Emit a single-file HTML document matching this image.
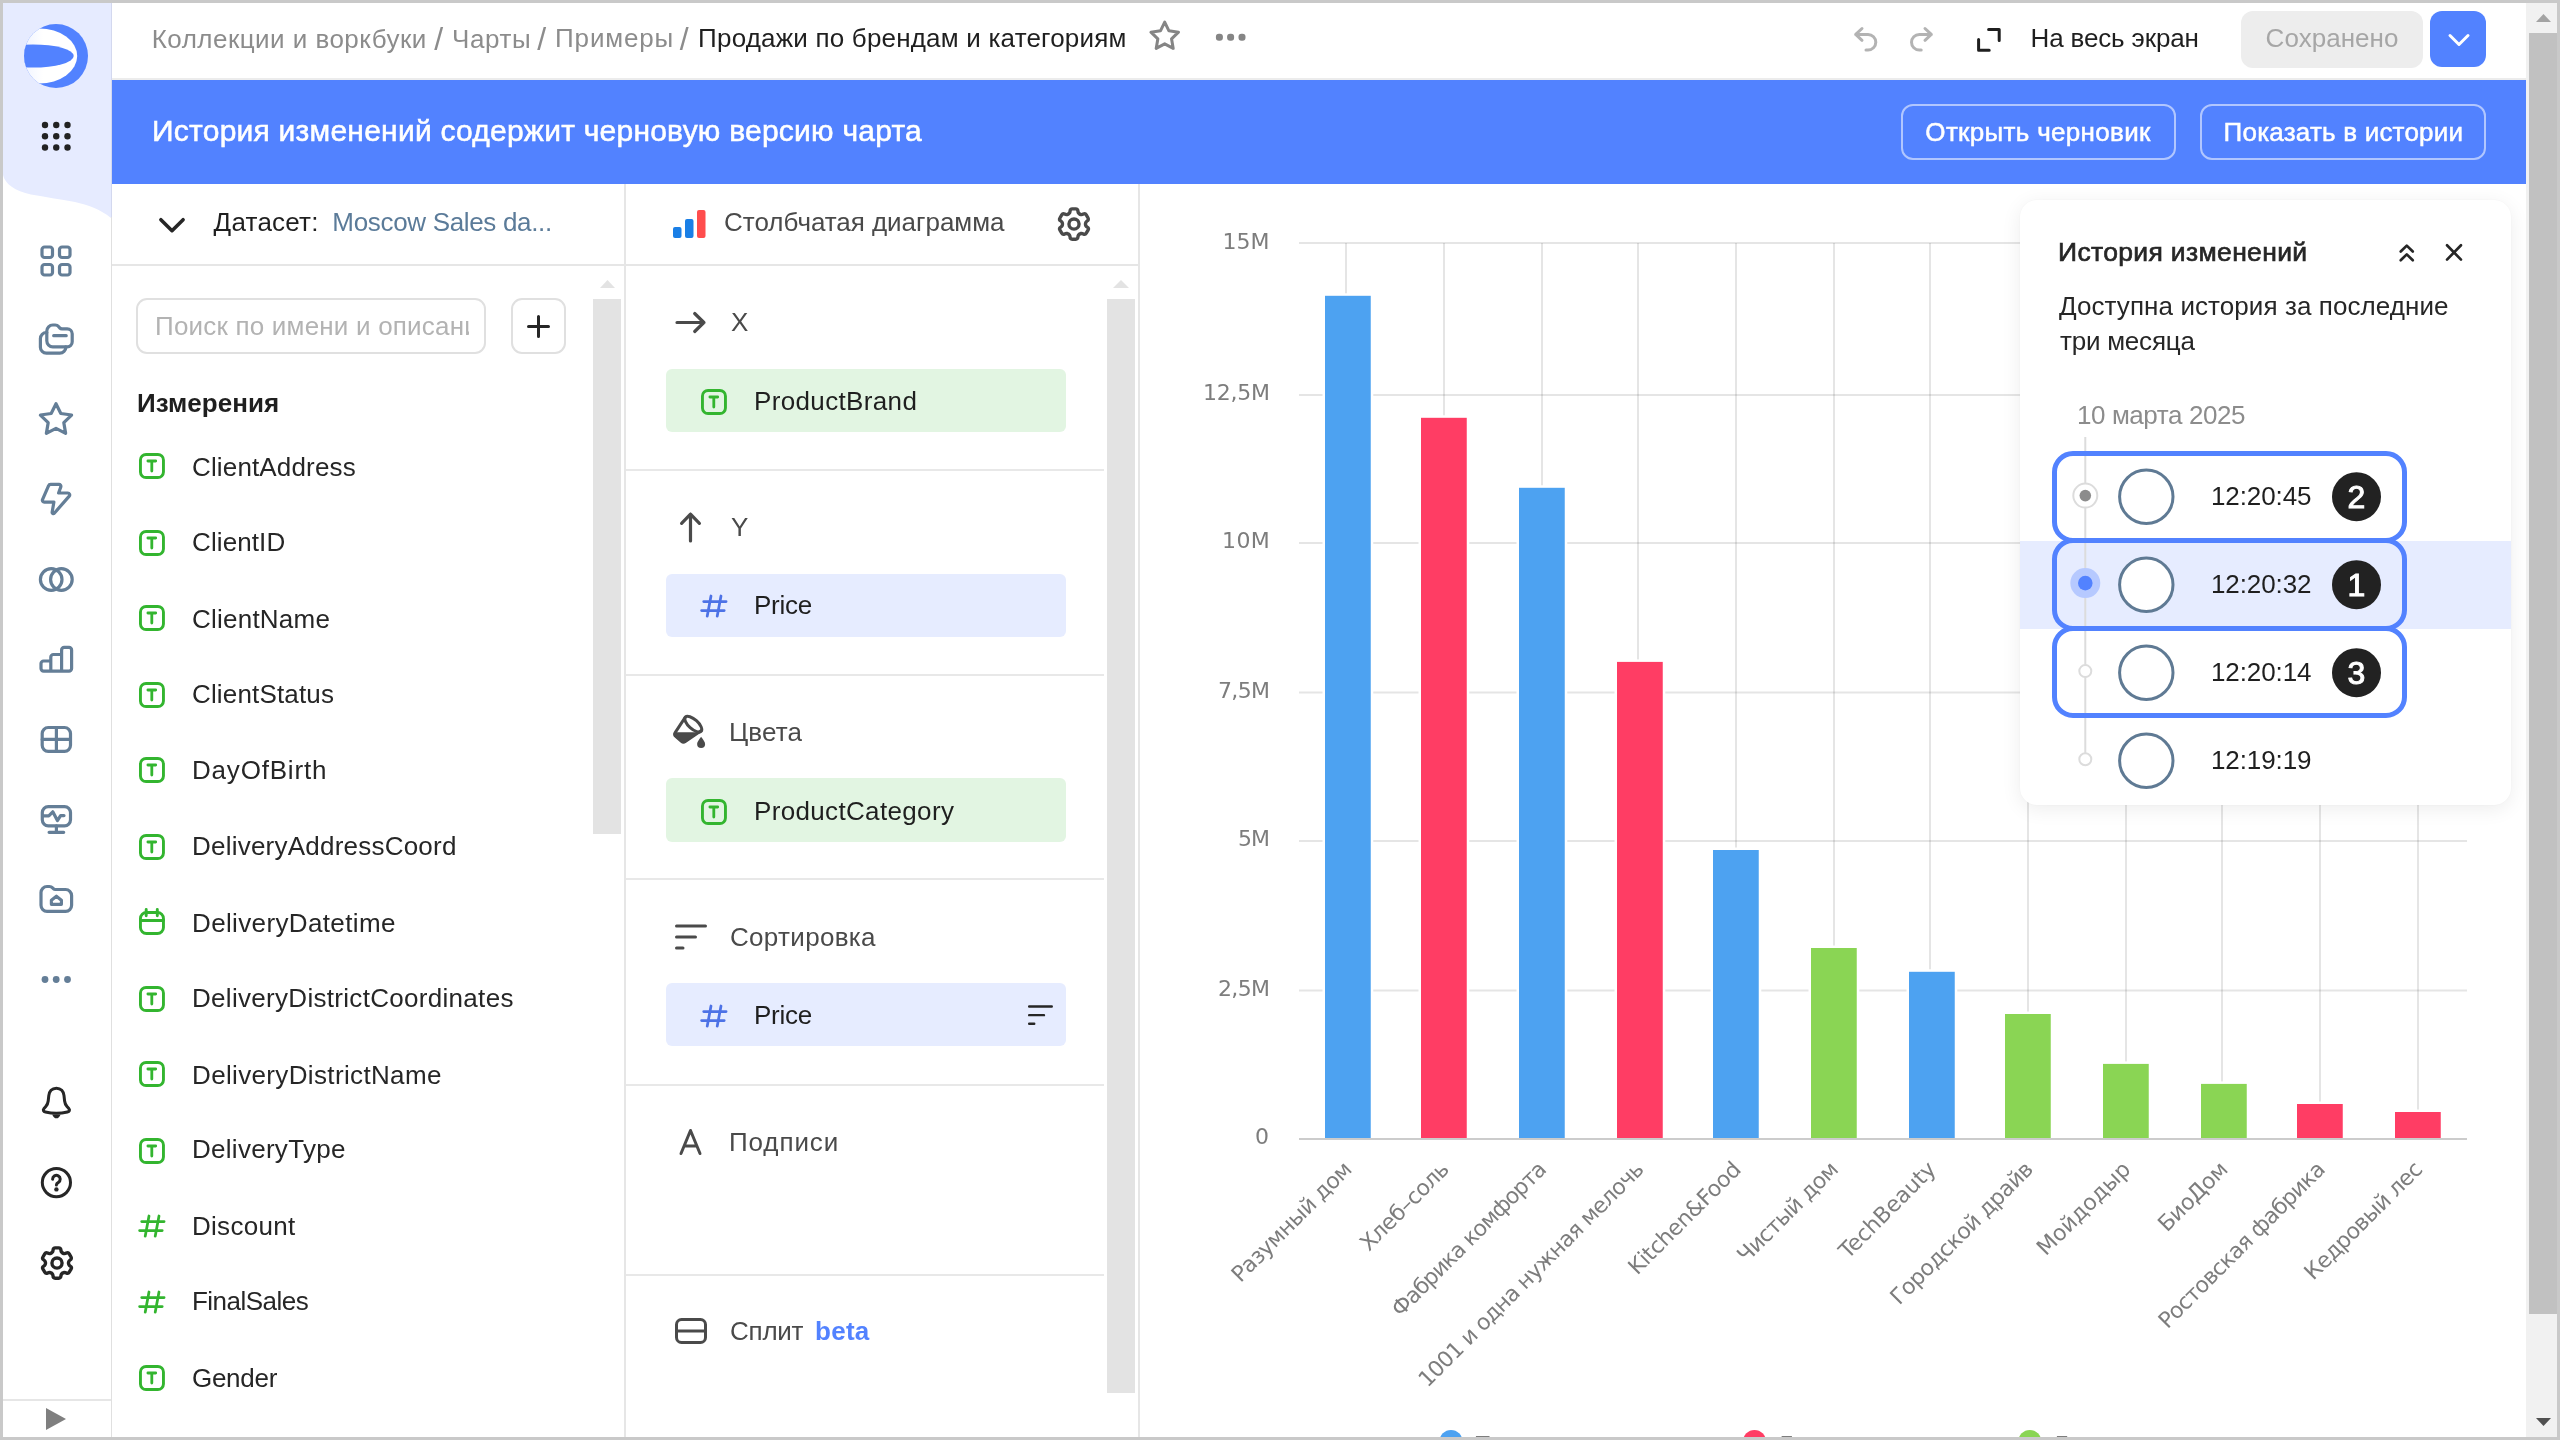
<!DOCTYPE html>
<html lang="ru"><head><meta charset="utf-8"><title>Продажи по брендам и категориям</title>
<style>
*{box-sizing:border-box;margin:0;padding:0}
html,body{width:2560px;height:1440px;overflow:hidden;background:#fff}
body{position:relative;font-family:"Liberation Sans",sans-serif}
.a{position:absolute}
.t{position:absolute;white-space:pre;line-height:1}
.g{will-change:transform}
svg{position:absolute;overflow:visible}
.ic{fill:none;stroke:#647e97;stroke-width:1.6;stroke-linecap:round;stroke-linejoin:round}
.ib{fill:none;stroke:#262626;stroke-width:1.5;stroke-linecap:round;stroke-linejoin:round}
.ig{fill:none;stroke:#33b52f;stroke-width:1.5;stroke-linecap:round;stroke-linejoin:round}
.is{fill:none;stroke:#4a4a4a;stroke-width:1.5;stroke-linecap:round;stroke-linejoin:round}
</style></head>
<body>
<svg style="left:0;top:0" width="112" height="230" viewBox="0 0 112 230"><path d="M3 3H111V218C100 209 88 205 75 202C60 199 45 197 31 194.4C15 191 5 184 3 175Z" fill="#e6ebff"/></svg>
<div class="a" style="left:111px;top:3px;width:1px;height:1434px;background:#e0e0e0;"></div>
<div class="a" style="left:111px;top:3px;width:1px;height:214px;background:#d3d8ef;"></div>
<svg style="left:24px;top:24px" width="64" height="64" viewBox="0 0 64 64">
<defs><clipPath id="lc"><circle cx="32" cy="32" r="32"/></clipPath>
<linearGradient id="lg" x1="0" x2="1" y1="0" y2="0"><stop offset="0" stop-color="#dfe7ff"/><stop offset="0.55" stop-color="#ffffff"/></linearGradient></defs>
<circle cx="32" cy="32" r="32" fill="#5282ff"/>
<g clip-path="url(#lc)"><ellipse cx="15.3" cy="32" rx="37.9" ry="27.5" fill="url(#lg)"/>
<ellipse cx="9" cy="32" rx="40.7" ry="11.6" fill="#5282ff"/></g></svg>
<svg style="left:0;top:0" width="112" height="160" viewBox="0 0 112 160"><circle cx="45" cy="125" r="3.2" fill="#222"/><circle cx="56.25" cy="125" r="3.2" fill="#222"/><circle cx="67.5" cy="125" r="3.2" fill="#222"/><circle cx="45" cy="136.25" r="3.2" fill="#222"/><circle cx="56.25" cy="136.25" r="3.2" fill="#222"/><circle cx="67.5" cy="136.25" r="3.2" fill="#222"/><circle cx="45" cy="147.5" r="3.2" fill="#222"/><circle cx="56.25" cy="147.5" r="3.2" fill="#222"/><circle cx="67.5" cy="147.5" r="3.2" fill="#222"/></svg>
<svg style="left:40px;top:245px;" width="32" height="32" viewBox="0 0 16 16"><rect x="1" y="1" width="5.25" height="5.25" rx="1.3" class="ic"/><rect x="9.75" y="1" width="5.25" height="5.25" rx="1.3" class="ic"/><rect x="1" y="9.75" width="5.25" height="5.25" rx="1.3" class="ic"/><rect x="9.75" y="9.75" width="5.25" height="5.25" rx="1.3" class="ic"/></svg>
<svg style="left:40px;top:324px;" width="32" height="32" viewBox="0 0 16 16"><path class="ic" d="M3.4 3.5a3 3 0 0 1 3-3h1.2c.7 0 1.3.3 1.7.8l.6.7c.3.3.7.4 1.1.4h2.600a2.500 2.500 0 0 1 2.500 2.500v4a2.500 2.500 0 0 1-2.500 2.500h-7.200a3 3 0 0 1-3-3z"/><path class="ic" d="M6.850 5.830H13.100"/><path class="ic" d="M3.400 4.250h-.2a3 3 0 0 0-3 3v4.350a3 3 0 0 0 3 3h6.700a3 3 0 0 0 3-3v-.2"/></svg>
<svg style="left:40px;top:403px;" width="32" height="32" viewBox="0 0 16 16"><polygon class="ic" points="8.00,0.35 10.41,5.23 15.80,6.02 11.90,9.82 12.82,15.18 8.00,12.65 3.18,15.18 4.10,9.82 0.20,6.02 5.59,5.23"/></svg>
<svg style="left:40px;top:483px;" width="32" height="32" viewBox="0 0 16 16"><path class="ic" d="M5.300 .700H9.500a.95 .95 0 0 1 .9 1.250L9.300 5H13.900a.95 .95 0 0 1 .72 1.570L7.150 15.100a.62 .62 0 0 1-1.080-.5L6.950 9.550H2.150a.95 .95 0 0 1-.9-1.280L4.250 1.400a1.150 1.150 0 0 1 1.050-.700Z"/></svg>
<svg style="left:40px;top:563px;" width="32" height="32" viewBox="0 0 16 16"><circle class="ic" cx="5.6" cy="8.25" r="5.4"/><circle class="ic" cx="10.7" cy="8.25" r="5.4"/></svg>
<svg style="left:40px;top:643px;" width="32" height="32" viewBox="0 0 16 16"><path class="ic" d="M.5 10.300a1.300 1.300 0 0 1 1.300-1.300H5.400V7.050a1.300 1.300 0 0 1 1.300-1.300H10.800V3.450a1.300 1.300 0 0 1 1.300-1.300h2.400a1.300 1.300 0 0 1 1.300 1.300V12.800a1.300 1.300 0 0 1-1.300 1.300H1.800a1.300 1.300 0 0 1-1.300-1.300ZM5.400 9V14.100M10.800 5.750V14.100"/></svg>
<svg style="left:40px;top:723px;" width="32" height="32" viewBox="0 0 16 16"><rect class="ic" x="1.1" y="2.25" width="14.15" height="11.9" rx="3"/><path class="ic" d="M8.2 2.25v11.900M1.100 8.200h14.150"/></svg>
<svg style="left:40px;top:803px;" width="32" height="32" viewBox="0 0 16 16"><rect class="ic" x="1.15" y="1.8" width="14.1" height="9.6" rx="3"/><path class="ic" d="M8.200 11.400v3.250M4.550 14.650h7.300M1.500 6.450H4.400L6.400 4.400 8.700 8.800 10.300 6.300H12"/></svg>
<svg style="left:40px;top:883px;" width="32" height="32" viewBox="0 0 16 16"><path class="ic" d="M.5 4.750a3 3 0 0 1 3-3h1.200c.6 0 1.200.25 1.600.7l.5.5c.2.2.5.3.8.3h5.200a3 3 0 0 1 3 3v4.900a3 3 0 0 1-3 3H3.500a3 3 0 0 1-3-3Z"/><path class="ic" d="M5.700 8.600L8.200 6.600 10.700 8.600V10.650H5.700Z"/></svg>
<svg style="left:40px;top:963px;" width="32" height="32" viewBox="0 0 16 16"><circle cx="2.5" cy="8.25" r="1.7" fill="#647e97"/><circle cx="8.1" cy="8.25" r="1.7" fill="#647e97"/><circle cx="13.75" cy="8.25" r="1.7" fill="#647e97"/></svg>
<svg style="left:40px;top:1087px;" width="32" height="32" viewBox="0 0 16 16"><path class="ib" d="M8.200 .600C5.900 .600 4.600 2.300 4.400 4.300L4.100 7C4 8 3.600 8.900 2.900 9.700L2 10.700C1.300 11.500 1.700 12.300 2.700 12.500 6.300 13.300 10.100 13.300 13.700 12.500 14.700 12.300 15.100 11.500 14.400 10.700L13.500 9.700C12.800 8.900 12.400 8 12.300 7L12 4.300C11.800 2.300 10.500 .600 8.200 .600Z"/><path d="M6.100 13.700C6.500 14.900 7.300 15.650 8.200 15.650 9.100 15.650 9.900 14.900 10.300 13.700Z" fill="#262626"/></svg>
<svg style="left:40px;top:1167px;" width="32" height="32" viewBox="0 0 16 16"><circle class="ib" cx="8.2" cy="7.8" r="7.05"/><path class="ib" d="M6.300 6.100a1.900 1.900 0 1 1 2.900 1.600C8.500 8.100 8.200 8.400 8.200 9"/><circle cx="8.2" cy="11.2" r="1.1" fill="#262626"/></svg>
<svg style="left:38.9px;top:1245.0px;" width="36" height="36" viewBox="0 0 16 16"><path fill="#262626" fill-rule="evenodd" clip-rule="evenodd" d="M7.199 2H8.8a.2.2 0 0 1 .2.2c0 1.808 1.958 2.939 3.524 2.034a.199.199 0 0 1 .271.073l.802 1.388a.199.199 0 0 1-.073.272c-1.566.904-1.566 3.164 0 4.069a.199.199 0 0 1 .073.271l-.802 1.388a.199.199 0 0 1-.271.073C10.958 10.863 9 11.993 9 13.8a.2.2 0 0 1-.199.2H7.2a.199.199 0 0 1-.2-.2c0-1.808-1.958-2.938-3.524-2.034a.199.199 0 0 1-.272-.073l-.8-1.388a.199.199 0 0 1 .072-.271c1.566-.905 1.566-3.165 0-4.07a.199.199 0 0 1-.073-.271l.801-1.388a.199.199 0 0 1 .272-.073C5.042 5.138 7 4.007 7 2.2c0-.11.089-.199.199-.199ZM5.500 2.200c0-.94.76-1.700 1.699-1.700H8.800c.94 0 1.700.76 1.700 1.700a.85.85 0 0 0 1.274.735 1.699 1.699 0 0 1 2.320.622l.802 1.388c.469.813.19 1.851-.622 2.320a.85.85 0 0 0 0 1.472 1.700 1.700 0 0 1 .622 2.320l-.802 1.388a1.699 1.699 0 0 1-2.320.622.85.85 0 0 0-1.274.735c0 .939-.76 1.700-1.699 1.700H7.200a1.700 1.700 0 0 1-1.699-1.700.85.85 0 0 0-1.274-.735 1.698 1.698 0 0 1-2.320-.622l-.802-1.388a1.699 1.699 0 0 1 .622-2.320.85.85 0 0 0 0-1.471 1.699 1.699 0 0 1-.622-2.321l.801-1.388a1.699 1.699 0 0 1 2.320-.622A.85.85 0 0 0 5.500 2.200Zm4 5.800a1.500 1.500 0 1 1-3 0 1.500 1.500 0 0 1 3 0ZM11 8a3 3 0 1 1-6 0 3 3 0 0 1 6 0Z"/></svg>
<div class="a" style="left:3px;top:1399px;width:108px;height:2px;background:#e6e6e6;"></div>
<svg style="left:46px;top:1408px" width="20" height="22" viewBox="0 0 20 22"><path d="M0 0L20 11 0 22z" fill="#7f7f7f"/></svg>
<div class="a" style="left:112px;top:78px;width:2414px;height:2px;background:#ececec;"></div>
<svg style="left:0;top:0" width="1300" height="80" viewBox="0 0 1300 80"><polygon points="1164.70,22.16 1168.93,30.84 1178.49,32.18 1171.55,38.88 1173.22,48.39 1164.70,43.86 1156.18,48.39 1157.85,38.88 1150.91,32.18 1160.47,30.84" fill="none" stroke="#858585" stroke-width="3" stroke-linejoin="round"/><rect x="1215.900" y="33.700" width="7" height="7" rx="3" fill="#858585"/><rect x="1227.100" y="33.700" width="7" height="7" rx="3" fill="#858585"/><rect x="1238.500" y="33.700" width="7" height="7" rx="3" fill="#858585"/></svg>
<svg style="left:0;top:0" width="2560" height="80" viewBox="0 0 2560 80"><g fill="none" stroke="#b3b3b3" stroke-width="3" stroke-linecap="round" stroke-linejoin="round"><path d="M1862 28.500L1855.700 34.400 1862 40.300M1855.700 34.400H1868a7.800 7.800 0 0 1 0 15.600H1866"/><path d="M1925 28.500L1931.300 34.400 1925 40.300M1931.300 34.400H1919.300a7.800 7.800 0 0 0 0 15.600H1921.200"/></g><path d="M1988.600 29.500H1999.200V40.400M1978.600 39.400V50.350H1989.200" fill="none" stroke="#1f1f1f" stroke-width="3" stroke-linecap="round" stroke-linejoin="round"/></svg>
<div class="a" style="left:2241px;top:11px;width:181.5px;height:56.5px;background:#ededed;border-radius:12px"></div>
<div class="a" style="left:2430px;top:11px;width:56px;height:56px;background:#5282ff;border-radius:12px"></div>
<svg style="left:2448px;top:33px" width="22" height="14" viewBox="0 0 22 14"><path d="M2 2.500L11 11.500 20 2.500" fill="none" stroke="#fff" stroke-width="3" stroke-linecap="round" stroke-linejoin="round"/></svg>
<div class="a" style="left:112px;top:80px;width:2414px;height:104px;background:#5282ff;"></div>
<div class="a" style="left:1900.75px;top:103.75px;width:275px;height:56.25px;background:transparent;border:2px solid rgba(255,255,255,.55);border-radius:12px"></div>
<div class="a" style="left:2200px;top:103.75px;width:286px;height:56.25px;background:transparent;border:2px solid rgba(255,255,255,.55);border-radius:12px"></div>
<div class="a" style="left:112px;top:264px;width:1026px;height:2px;background:#e6e6e6;"></div>
<div class="a" style="left:624px;top:184px;width:2px;height:1253px;background:#e6e6e6;"></div>
<div class="a" style="left:1138px;top:184px;width:2px;height:1253px;background:#e6e6e6;"></div>
<svg style="left:158px;top:217px" width="28" height="17" viewBox="0 0 28 17"><path d="M2.900 2.700L14 13.700 25.100 2.700" fill="none" stroke="#262626" stroke-width="3.6" stroke-linecap="round" stroke-linejoin="round"/></svg>
<div class="a" style="left:136px;top:298px;width:350px;height:55.5px;background:#fff;border:2px solid #e0e0e0;border-radius:11px"></div>
<div class="a" style="left:510.75px;top:298px;width:55px;height:55.5px;background:#fff;border:2px solid #e0e0e0;border-radius:11px"></div>
<svg style="left:526.75px;top:314.500px" width="23" height="23" viewBox="0 0 23 23"><path d="M11.500 1.500V21.500M1.500 11.500H21.500" fill="none" stroke="#262626" stroke-width="3" stroke-linecap="round"/></svg>
<svg style="left:600px;top:280px" width="15" height="8" viewBox="0 0 15 8"><path d="M0 8L7.500 0 15 8z" fill="#e3e3e3"/></svg>
<div class="a" style="left:593px;top:298.5px;width:28px;height:535.5px;background:#e3e3e3;"></div>
<svg style="left:139.1px;top:453px;" width="26" height="26" viewBox="0 0 26 26"><rect x="1.45" y="1.45" width="23" height="23.1" rx="5.6" class="ig" style="stroke-width:2.9"/><path d="M8.900 8H16.700M12.800 8V18.050" class="ig" style="stroke-width:2.8"/></svg>
<svg style="left:139.1px;top:530.3px;" width="26" height="26" viewBox="0 0 26 26"><rect x="1.45" y="1.45" width="23" height="23.1" rx="5.6" class="ig" style="stroke-width:2.9"/><path d="M8.900 8H16.700M12.800 8V18.050" class="ig" style="stroke-width:2.8"/></svg>
<svg style="left:139.1px;top:605.3px;" width="26" height="26" viewBox="0 0 26 26"><rect x="1.45" y="1.45" width="23" height="23.1" rx="5.6" class="ig" style="stroke-width:2.9"/><path d="M8.900 8H16.700M12.800 8V18.050" class="ig" style="stroke-width:2.8"/></svg>
<svg style="left:139.1px;top:682.3px;" width="26" height="26" viewBox="0 0 26 26"><rect x="1.45" y="1.45" width="23" height="23.1" rx="5.6" class="ig" style="stroke-width:2.9"/><path d="M8.900 8H16.700M12.800 8V18.050" class="ig" style="stroke-width:2.8"/></svg>
<svg style="left:139.1px;top:757.3px;" width="26" height="26" viewBox="0 0 26 26"><rect x="1.45" y="1.45" width="23" height="23.1" rx="5.6" class="ig" style="stroke-width:2.9"/><path d="M8.900 8H16.700M12.800 8V18.050" class="ig" style="stroke-width:2.8"/></svg>
<svg style="left:139.1px;top:834px;" width="26" height="26" viewBox="0 0 26 26"><rect x="1.45" y="1.45" width="23" height="23.1" rx="5.6" class="ig" style="stroke-width:2.9"/><path d="M8.900 8H16.700M12.800 8V18.050" class="ig" style="stroke-width:2.8"/></svg>
<svg style="left:139.1px;top:986px;" width="26" height="26" viewBox="0 0 26 26"><rect x="1.45" y="1.45" width="23" height="23.1" rx="5.6" class="ig" style="stroke-width:2.9"/><path d="M8.900 8H16.700M12.800 8V18.050" class="ig" style="stroke-width:2.8"/></svg>
<svg style="left:139.1px;top:1060.8px;" width="26" height="26" viewBox="0 0 26 26"><rect x="1.45" y="1.45" width="23" height="23.1" rx="5.6" class="ig" style="stroke-width:2.9"/><path d="M8.900 8H16.700M12.800 8V18.050" class="ig" style="stroke-width:2.8"/></svg>
<svg style="left:139.1px;top:1137.8px;" width="26" height="26" viewBox="0 0 26 26"><rect x="1.45" y="1.45" width="23" height="23.1" rx="5.6" class="ig" style="stroke-width:2.9"/><path d="M8.900 8H16.700M12.800 8V18.050" class="ig" style="stroke-width:2.8"/></svg>
<svg style="left:139.1px;top:1365.3px;" width="26" height="26" viewBox="0 0 26 26"><rect x="1.45" y="1.45" width="23" height="23.1" rx="5.6" class="ig" style="stroke-width:2.9"/><path d="M8.900 8H16.700M12.800 8V18.050" class="ig" style="stroke-width:2.8"/></svg>
<svg style="left:139.1px;top:908px;" width="26" height="27" viewBox="0 0 26 27"><rect x="1.45" y="4.450" width="23" height="21" rx="6" class="ig" style="stroke-width:2.9"/><path d="M1.500 12.550h23M7.200 1.400v6.300M18.300 1.400v6.300" class="ig" style="stroke-width:2.9"/></svg>
<svg style="left:138px;top:1213px;" width="28" height="26" viewBox="0 0 28 26"><path d="M3.700 8.500H26.100M1.600 17.500H24.200M11 3L7.200 23.200M21 3L17.200 23.200" fill="none" stroke="#33b52f" stroke-width="2.750" stroke-linecap="round"/></svg>
<svg style="left:138px;top:1288.5px;" width="28" height="26" viewBox="0 0 28 26"><path d="M3.700 8.500H26.100M1.600 17.500H24.200M11 3L7.200 23.200M21 3L17.200 23.200" fill="none" stroke="#33b52f" stroke-width="2.750" stroke-linecap="round"/></svg>
<svg style="left:673px;top:210px" width="33" height="28" viewBox="0 0 33 28"><rect x="0" y="17" width="8.500" height="11" rx="2" fill="#1a7fe6"/><rect x="12" y="9" width="8.500" height="19" rx="2" fill="#1a7fe6"/><rect x="24" y="0" width="8.500" height="28" rx="2" fill="#ff4d4d"/></svg>
<svg style="left:1056px;top:206.2px;" width="36" height="36" viewBox="0 0 16 16"><path fill="#4a4a4a" fill-rule="evenodd" clip-rule="evenodd" d="M7.199 2H8.8a.2.2 0 0 1 .2.2c0 1.808 1.958 2.939 3.524 2.034a.199.199 0 0 1 .271.073l.802 1.388a.199.199 0 0 1-.073.272c-1.566.904-1.566 3.164 0 4.069a.199.199 0 0 1 .073.271l-.802 1.388a.199.199 0 0 1-.271.073C10.958 10.863 9 11.993 9 13.8a.2.2 0 0 1-.199.2H7.2a.199.199 0 0 1-.2-.2c0-1.808-1.958-2.938-3.524-2.034a.199.199 0 0 1-.272-.073l-.8-1.388a.199.199 0 0 1 .072-.271c1.566-.905 1.566-3.165 0-4.07a.199.199 0 0 1-.073-.271l.801-1.388a.199.199 0 0 1 .272-.073C5.042 5.138 7 4.007 7 2.2c0-.11.089-.199.199-.199ZM5.500 2.200c0-.94.76-1.700 1.699-1.700H8.800c.94 0 1.700.76 1.700 1.700a.85.85 0 0 0 1.274.735 1.699 1.699 0 0 1 2.320.622l.802 1.388c.469.813.19 1.851-.622 2.320a.85.85 0 0 0 0 1.472 1.700 1.700 0 0 1 .622 2.320l-.802 1.388a1.699 1.699 0 0 1-2.320.622.85.85 0 0 0-1.274.735c0 .939-.76 1.700-1.699 1.700H7.200a1.700 1.700 0 0 1-1.699-1.700.85.85 0 0 0-1.274-.735 1.698 1.698 0 0 1-2.320-.622l-.802-1.388a1.699 1.699 0 0 1 .622-2.320.85.85 0 0 0 0-1.471 1.699 1.699 0 0 1-.622-2.321l.801-1.388a1.699 1.699 0 0 1 2.320-.622A.85.85 0 0 0 5.500 2.200Zm4 5.800a1.500 1.500 0 1 1-3 0 1.500 1.500 0 0 1 3 0ZM11 8a3 3 0 1 1-6 0 3 3 0 0 1 6 0Z"/></svg>
<svg style="left:1113px;top:280px" width="16" height="8" viewBox="0 0 16 8"><path d="M0 8L8 0 16 8z" fill="#e3e3e3"/></svg>
<div class="a" style="left:1107px;top:298.5px;width:28px;height:1094px;background:#e3e3e3;"></div>
<div class="a" style="left:626px;top:469px;width:478px;height:2px;background:#e8e8e8;"></div>
<div class="a" style="left:626px;top:674px;width:478px;height:2px;background:#e8e8e8;"></div>
<div class="a" style="left:626px;top:878px;width:478px;height:2px;background:#e8e8e8;"></div>
<div class="a" style="left:626px;top:1084px;width:478px;height:2px;background:#e8e8e8;"></div>
<div class="a" style="left:626px;top:1274px;width:478px;height:2px;background:#e8e8e8;"></div>
<div class="a" style="left:666.25px;top:368.5px;width:399.5px;height:63.5px;background:#e2f5e2;border-radius:6px"></div>
<div class="a" style="left:666.25px;top:573.75px;width:399.5px;height:63px;background:#e6ecff;border-radius:6px"></div>
<div class="a" style="left:666.25px;top:778px;width:399.5px;height:63.75px;background:#e2f5e2;border-radius:6px"></div>
<div class="a" style="left:666.25px;top:983px;width:399.5px;height:63.25px;background:#e6ecff;border-radius:6px"></div>
<svg style="left:701.3px;top:389.3px;" width="26" height="26" viewBox="0 0 26 26"><rect x="1.45" y="1.45" width="23" height="23.1" rx="5.6" class="ig" style="stroke-width:2.9"/><path d="M8.900 8H16.700M12.800 8V18.050" class="ig" style="stroke-width:2.8"/></svg>
<svg style="left:701.3px;top:798.8px;" width="26" height="26" viewBox="0 0 26 26"><rect x="1.45" y="1.45" width="23" height="23.1" rx="5.6" class="ig" style="stroke-width:2.9"/><path d="M8.900 8H16.700M12.800 8V18.050" class="ig" style="stroke-width:2.8"/></svg>
<svg style="left:700.45px;top:593.3px;" width="28" height="26" viewBox="0 0 28 26"><path d="M3.700 8.500H26.100M1.600 17.500H24.200M11 3L7.200 23.200M21 3L17.200 23.200" fill="none" stroke="#4d72e6" stroke-width="2.750" stroke-linecap="round"/></svg>
<svg style="left:700.45px;top:1002.6px;" width="28" height="26" viewBox="0 0 28 26"><path d="M3.700 8.500H26.100M1.600 17.500H24.200M11 3L7.200 23.200M21 3L17.200 23.200" fill="none" stroke="#4d72e6" stroke-width="2.750" stroke-linecap="round"/></svg>
<svg style="left:675px;top:309px" width="32" height="27" viewBox="0 0 32 27"><path d="M2 13.500H29M19.700 4.500L28.900 13.500 19.700 22.500" fill="none" stroke="#4a4a4a" stroke-width="3.2" stroke-linecap="round" stroke-linejoin="round"/></svg>
<svg style="left:677px;top:511px" width="27" height="32" viewBox="0 0 27 32"><path d="M13.500 30V3.200M4.600 12.300L13.500 3.200 22.400 12.300" fill="none" stroke="#4a4a4a" stroke-width="3.2" stroke-linecap="round" stroke-linejoin="round"/></svg>
<svg style="left:660px;top:705px" width="60" height="50" viewBox="0 0 60 50"><g fill="none" stroke="#4a4a4a" stroke-width="3" stroke-linejoin="round" stroke-linecap="round"><path d="M25.200 12.300L15.300 27.300a3.200 3.200 0 0 0 .7 4.300L21.500 36.300a3.200 3.200 0 0 0 3.800 .2L41 25.800"/><ellipse cx="33.300" cy="19.200" rx="10.600" ry="4.700" transform="rotate(42 33.300 19.200)"/></g><path d="M14.600 28H37.500L41 25.800 25.300 36.500a3.200 3.200 0 0 1-3.800-.2L16 31.600a3.200 3.200 0 0 1-1.400-3.600Z" fill="#4a4a4a" stroke="#4a4a4a" stroke-width="1.5" stroke-linejoin="round"/><path d="M41.100 31.800C43.500 35 45.100 37.300 45.100 39a4 4 0 0 1-8 0C37.100 37.300 38.700 35 41.100 31.800Z" fill="#4a4a4a"/></svg>
<svg style="left:674.5px;top:923.5px" width="32" height="26" viewBox="0 0 32 26"><path d="M1.500 2H30.500M1.500 13H20.500M1.500 24H8" fill="none" stroke="#4a4a4a" stroke-width="3.00" stroke-linecap="round"/></svg>
<svg style="left:1027.5px;top:1004.5px" width="24.96" height="20.28" viewBox="0 0 32 26"><path d="M1.500 2H30.500M1.500 13H20.500M1.500 24H8" fill="none" stroke="#262626" stroke-width="3.08" stroke-linecap="round"/></svg>
<svg style="left:679px;top:1129px" width="23" height="26" viewBox="0 0 23 26"><path d="M2 24.500L11.500 1.500 21 24.500M5.300 17H17.700" fill="none" stroke="#4a4a4a" stroke-width="3" stroke-linecap="round" stroke-linejoin="round"/></svg>
<svg style="left:674.5px;top:1317.500px" width="32" height="26" viewBox="0 0 32 26"><rect x="1.500" y="1.500" width="29" height="23" rx="5" fill="none" stroke="#4a4a4a" stroke-width="3"/><path d="M1.500 13H30.500" stroke="#4a4a4a" stroke-width="3"/></svg>
<svg style="left:0;top:0;will-change:transform" width="2560" height="1440" viewBox="0 0 2560 1440"><rect x="1299" y="242" width="1168" height="2" fill="rgba(0,0,0,.1)"/><rect x="1299" y="394" width="1168" height="2" fill="rgba(0,0,0,.1)"/><rect x="1299" y="542" width="1168" height="2" fill="rgba(0,0,0,.1)"/><rect x="1299" y="691.5" width="1168" height="2" fill="rgba(0,0,0,.1)"/><rect x="1299" y="840" width="1168" height="2" fill="rgba(0,0,0,.1)"/><rect x="1299" y="989.5" width="1168" height="2" fill="rgba(0,0,0,.1)"/><rect x="1345" y="243" width="2" height="896" fill="rgba(0,0,0,.1)"/><rect x="1443" y="243" width="2" height="896" fill="rgba(0,0,0,.1)"/><rect x="1541" y="243" width="2" height="896" fill="rgba(0,0,0,.1)"/><rect x="1637" y="243" width="2" height="896" fill="rgba(0,0,0,.1)"/><rect x="1735" y="243" width="2" height="896" fill="rgba(0,0,0,.1)"/><rect x="1833" y="243" width="2" height="896" fill="rgba(0,0,0,.1)"/><rect x="1929" y="243" width="2" height="896" fill="rgba(0,0,0,.1)"/><rect x="2027" y="243" width="2" height="896" fill="rgba(0,0,0,.1)"/><rect x="2125" y="243" width="2" height="896" fill="rgba(0,0,0,.1)"/><rect x="2221" y="243" width="2" height="896" fill="rgba(0,0,0,.1)"/><rect x="2319" y="243" width="2" height="896" fill="rgba(0,0,0,.1)"/><rect x="2417" y="243" width="2" height="896" fill="rgba(0,0,0,.1)"/><rect x="1299" y="1138" width="1168" height="2" fill="#cccccc"/><rect x="1322.5" y="293.3" width="50.75" height="844.7" fill="#fff"/><rect x="1325" y="295.8" width="45.75" height="842.2" fill="#4da2f1"/><rect x="1418.5" y="415.3" width="50.75" height="722.7" fill="#fff"/><rect x="1421" y="417.8" width="45.75" height="720.2" fill="#ff3d64"/><rect x="1516.5" y="485.3" width="50.75" height="652.7" fill="#fff"/><rect x="1519" y="487.8" width="45.75" height="650.2" fill="#4da2f1"/><rect x="1614.5" y="659.4" width="50.75" height="478.6" fill="#fff"/><rect x="1617" y="661.9" width="45.75" height="476.1" fill="#ff3d64"/><rect x="1710.5" y="847.5" width="50.75" height="290.5" fill="#fff"/><rect x="1713" y="850" width="45.75" height="288" fill="#4da2f1"/><rect x="1808.5" y="945.5" width="50.75" height="192.5" fill="#fff"/><rect x="1811" y="948" width="45.75" height="190" fill="#8ad554"/><rect x="1906.5" y="969.3" width="50.75" height="168.70000000000005" fill="#fff"/><rect x="1909" y="971.8" width="45.75" height="166.20000000000005" fill="#4da2f1"/><rect x="2002.5" y="1011.5" width="50.75" height="126.5" fill="#fff"/><rect x="2005" y="1014" width="45.75" height="124" fill="#8ad554"/><rect x="2100.5" y="1061.4" width="50.75" height="76.59999999999991" fill="#fff"/><rect x="2103" y="1063.9" width="45.75" height="74.09999999999991" fill="#8ad554"/><rect x="2198.5" y="1081.4" width="50.75" height="56.59999999999991" fill="#fff"/><rect x="2201" y="1083.9" width="45.75" height="54.09999999999991" fill="#8ad554"/><rect x="2294.5" y="1101.5" width="50.75" height="36.5" fill="#fff"/><rect x="2297" y="1104" width="45.75" height="34" fill="#ff3d64"/><rect x="2392.5" y="1109.5" width="50.75" height="28.5" fill="#fff"/><rect x="2395" y="1112" width="45.75" height="26" fill="#ff3d64"/><text transform="translate(1353.2,1170.5) rotate(-45)" text-anchor="end" textLength="159.5" lengthAdjust="spacing" font-family='"DejaVu Sans","Liberation Sans",sans-serif' font-size="22" fill="#7d7d7d">Разумный дом</text><text transform="translate(1450.5,1170.5) rotate(-45)" text-anchor="end" textLength="115.3" lengthAdjust="spacing" font-family='"DejaVu Sans","Liberation Sans",sans-serif' font-size="22" fill="#7d7d7d">Хлеб–соль</text><text transform="translate(1547.8,1170.5) rotate(-45)" text-anchor="end" textLength="208.3" lengthAdjust="spacing" font-family='"DejaVu Sans","Liberation Sans",sans-serif' font-size="22" fill="#7d7d7d">Фабрика комфорта</text><text transform="translate(1645.2,1170.5) rotate(-45)" text-anchor="end" textLength="308" lengthAdjust="spacing" font-family='"DejaVu Sans","Liberation Sans",sans-serif' font-size="22" fill="#7d7d7d">1001 и одна нужная мелочь</text><text transform="translate(1742.5,1170.5) rotate(-45)" text-anchor="end" textLength="148.9" lengthAdjust="spacing" font-family='"DejaVu Sans","Liberation Sans",sans-serif' font-size="22" fill="#7d7d7d">Kitchen&amp;Food</text><text transform="translate(1839.8,1170.5) rotate(-45)" text-anchor="end" textLength="132.3" lengthAdjust="spacing" font-family='"DejaVu Sans","Liberation Sans",sans-serif' font-size="22" fill="#7d7d7d">Чистый дом</text><text transform="translate(1937.2,1170.5) rotate(-45)" text-anchor="end" textLength="126.2" lengthAdjust="spacing" font-family='"DejaVu Sans","Liberation Sans",sans-serif' font-size="22" fill="#7d7d7d">TechBeauty</text><text transform="translate(2034.5,1170.5) rotate(-45)" text-anchor="end" textLength="191.4" lengthAdjust="spacing" font-family='"DejaVu Sans","Liberation Sans",sans-serif' font-size="22" fill="#7d7d7d">Городской драйв</text><text transform="translate(2131.8,1170.5) rotate(-45)" text-anchor="end" textLength="121.7" lengthAdjust="spacing" font-family='"DejaVu Sans","Liberation Sans",sans-serif' font-size="22" fill="#7d7d7d">Мойдодыр</text><text transform="translate(2229.2,1170.5) rotate(-45)" text-anchor="end" textLength="88.1" lengthAdjust="spacing" font-family='"DejaVu Sans","Liberation Sans",sans-serif' font-size="22" fill="#7d7d7d">БиоДом</text><text transform="translate(2326.5,1170.5) rotate(-45)" text-anchor="end" textLength="225" lengthAdjust="spacing" font-family='"DejaVu Sans","Liberation Sans",sans-serif' font-size="22" fill="#7d7d7d">Ростовская фабрика</text><text transform="translate(2423.8,1170.5) rotate(-45)" text-anchor="end" textLength="156.3" lengthAdjust="spacing" font-family='"DejaVu Sans","Liberation Sans",sans-serif' font-size="22" fill="#7d7d7d">Кедровый лес</text><circle cx="1451" cy="1441.5" r="11.5" fill="#4da2f1"/><text x="1476" y="1451.6" font-family='"DejaVu Sans","Liberation Sans",sans-serif' font-size="22" fill="#7d7d7d">Техника для дома</text><circle cx="1754.5" cy="1441.5" r="11.5" fill="#ff3d64"/><text x="1779.5" y="1451.6" font-family='"DejaVu Sans","Liberation Sans",sans-serif' font-size="22" fill="#7d7d7d">Бытовая химия</text><circle cx="2029.8" cy="1441.5" r="11.5" fill="#8ad554"/><text x="2054.8" y="1451.6" font-family='"DejaVu Sans","Liberation Sans",sans-serif' font-size="22" fill="#7d7d7d">Бытовые товары</text></svg>
<div class="a" style="left:2019.5px;top:200px;width:491px;height:604.5px;background:#fff;border-radius:17px;box-shadow:0 4px 20px rgba(0,0,0,.075),0 0 2px rgba(0,0,0,.05)"></div>
<div class="a" style="left:2019.5px;top:541px;width:491px;height:87.5px;background:#e6ecff;"></div>
<svg style="left:0;top:0;will-change:transform" width="2560" height="1440" viewBox="0 0 2560 1440"><path d="M2400.700 251.500L2406.750 245.600 2412.800 251.500M2400.700 260.300L2406.750 254.400 2412.800 260.300" fill="none" stroke="#262626" stroke-width="2.700" stroke-linecap="round" stroke-linejoin="round"/><path d="M2447 245.300L2461 259.600M2461 245.300L2447 259.600" fill="none" stroke="#262626" stroke-width="2.700" stroke-linecap="round"/><rect x="2084.300" y="437" width="2" height="316" fill="#dcdcdc"/><circle cx="2085.300" cy="495.600" r="12" fill="#fff" stroke="#dcdcdc" stroke-width="2"/><circle cx="2085.300" cy="495.600" r="5.800" fill="#8c8c8c"/><circle cx="2085.300" cy="583.100" r="15" fill="#b6c9ff"/><circle cx="2085.300" cy="583.100" r="7.300" fill="#5282ff"/><circle cx="2085.300" cy="671.100" r="6" fill="#fff" stroke="#dcdcdc" stroke-width="2"/><circle cx="2085.300" cy="759.300" r="6" fill="#fff" stroke="#dcdcdc" stroke-width="2"/><circle cx="2146.300" cy="496.7" r="26.700" fill="#fff" stroke="#5f7a94" stroke-width="3"/><circle cx="2146.300" cy="584.7" r="26.700" fill="#fff" stroke="#5f7a94" stroke-width="3"/><circle cx="2146.300" cy="672.7" r="26.700" fill="#fff" stroke="#5f7a94" stroke-width="3"/><circle cx="2146.300" cy="760.7" r="26.700" fill="#fff" stroke="#5f7a94" stroke-width="3"/><circle cx="2356.500" cy="496.7" r="24.500" fill="#222"/><text x="2356.500" y="508.0" text-anchor="middle" font-family='"Liberation Sans",sans-serif' font-size="32" fill="#fff" stroke="#fff" stroke-width="1">2</text><circle cx="2356.500" cy="584.7" r="24.500" fill="#222"/><text x="2356.500" y="596.0" text-anchor="middle" font-family='"Liberation Sans",sans-serif' font-size="32" fill="#fff" stroke="#fff" stroke-width="1">1</text><circle cx="2356.500" cy="672.7" r="24.500" fill="#222"/><text x="2356.500" y="684.0" text-anchor="middle" font-family='"Liberation Sans",sans-serif' font-size="32" fill="#fff" stroke="#fff" stroke-width="1">3</text></svg>
<div class="a" style="left:2052px;top:450.8px;width:355px;height:92.5px;background:transparent;border:5px solid #5282ff;border-radius:21px"></div>
<div class="a" style="left:2052px;top:538.3px;width:355px;height:92.5px;background:transparent;border:5px solid #5282ff;border-radius:21px"></div>
<div class="a" style="left:2052px;top:625.8px;width:355px;height:92.5px;background:transparent;border:5px solid #5282ff;border-radius:21px"></div>
<div class="a" style="left:150px;top:304px;width:319px;height:44px;overflow:hidden"><span class="t g" style="left:4.500px;top:8.500px;font-size:26px;color:#b3b3b3;letter-spacing:0.2px">Поиск по имени и описанию</span></div>
<span class="t" style='left:151.75px;top:25.59px;font-size:26px;color:#8c8c8c;letter-spacing:0.466px;'>Коллекции и воркбуки</span>
<span class="t" style='left:434.20px;top:22.51px;font-size:32px;color:#8c8c8c;'>/</span>
<span class="t" style='left:452.06px;top:25.59px;font-size:26px;color:#8c8c8c;letter-spacing:0.604px;'>Чарты</span>
<span class="t" style='left:537.20px;top:22.51px;font-size:32px;color:#8c8c8c;'>/</span>
<span class="t" style='left:555.10px;top:25.29px;font-size:26px;color:#8c8c8c;letter-spacing:0.822px;'>Примеры</span>
<span class="t" style='left:679.70px;top:22.51px;font-size:32px;color:#8c8c8c;'>/</span>
<span class="t" style='left:698.10px;top:24.79px;font-size:26px;color:#1f1f1f;letter-spacing:0.195px;'>Продажи по брендам и категориям</span>
<span class="t" style='left:2030.60px;top:25.49px;font-size:26px;color:#1f1f1f;letter-spacing:-0.156px;'>На весь экран</span>
<span class="t" style='left:2265.60px;top:25.49px;font-size:26px;color:#a6a6a6;letter-spacing:0.045px;'>Сохранено</span>
<span class="t" style='left:152.06px;top:115.61px;font-size:30px;color:#fff;letter-spacing:0.235px;-webkit-text-stroke:0.55px #fff;'>История изменений содержит черновую версию чарта</span>
<span class="t" style='left:1925.35px;top:119.29px;font-size:26px;color:#fff;letter-spacing:0.313px;-webkit-text-stroke:0.5px #fff;'>Открыть черновик</span>
<span class="t" style='left:2223.60px;top:119.29px;font-size:26px;color:#fff;letter-spacing:0.208px;-webkit-text-stroke:0.5px #fff;'>Показать в истории</span>
<span class="t" style='left:213.60px;top:209.29px;font-size:26px;color:#1f1f1f;letter-spacing:0.225px;'>Датасет:</span>
<span class="t" style='left:332.35px;top:209.29px;font-size:26px;color:#5b7b99;letter-spacing:-0.327px;'>Moscow Sales da...</span>
<span class="t" style='left:724.10px;top:209.29px;font-size:26px;color:#4a4a4a;letter-spacing:-0.037px;'>Столбчатая диаграмма</span>
<span class="t g" style='left:136.60px;top:389.74px;font-size:26px;color:#1f1f1f;font-weight:700;letter-spacing:0.027px;'>Измерения</span>
<span class="t g" style='left:192.00px;top:453.74px;font-size:26px;color:#262626;letter-spacing:0.150px;'>ClientAddress</span>
<span class="t g" style='left:192.00px;top:529.24px;font-size:26px;color:#262626;letter-spacing:0.101px;'>ClientID</span>
<span class="t g" style='left:192.00px;top:605.99px;font-size:26px;color:#262626;letter-spacing:0.226px;'>ClientName</span>
<span class="t g" style='left:192.00px;top:680.99px;font-size:26px;color:#262626;letter-spacing:0.156px;'>ClientStatus</span>
<span class="t g" style='left:192.00px;top:757.49px;font-size:26px;color:#262626;letter-spacing:0.802px;'>DayOfBirth</span>
<span class="t g" style='left:192.00px;top:832.99px;font-size:26px;color:#262626;letter-spacing:0.224px;'>DeliveryAddressCoord</span>
<span class="t g" style='left:192.00px;top:909.74px;font-size:26px;color:#262626;letter-spacing:0.361px;'>DeliveryDatetime</span>
<span class="t g" style='left:192.00px;top:984.74px;font-size:26px;color:#262626;letter-spacing:0.302px;'>DeliveryDistrictCoordinates</span>
<span class="t g" style='left:192.00px;top:1061.74px;font-size:26px;color:#262626;letter-spacing:0.351px;'>DeliveryDistrictName</span>
<span class="t g" style='left:192.00px;top:1136.24px;font-size:26px;color:#262626;letter-spacing:0.281px;'>DeliveryType</span>
<span class="t g" style='left:192.00px;top:1213.49px;font-size:26px;color:#262626;letter-spacing:0.281px;'>Discount</span>
<span class="t g" style='left:192.00px;top:1288.49px;font-size:26px;color:#262626;letter-spacing:-0.527px;'>FinalSales</span>
<span class="t g" style='left:192.00px;top:1365.49px;font-size:26px;color:#262626;letter-spacing:-0.283px;'>Gender</span>
<span class="t g" style='left:731.35px;top:308.99px;font-size:26px;color:#4a4a4a;'>X</span>
<span class="t g" style='left:753.60px;top:387.99px;font-size:26px;color:#1f1f1f;letter-spacing:0.352px;'>ProductBrand</span>
<span class="t g" style='left:730.60px;top:513.74px;font-size:26px;color:#4a4a4a;'>Y</span>
<span class="t g" style='left:753.60px;top:592.49px;font-size:26px;color:#1f1f1f;letter-spacing:-0.282px;'>Price</span>
<span class="t g" style='left:729.10px;top:719.49px;font-size:26px;color:#4a4a4a;letter-spacing:0.108px;'>Цвета</span>
<span class="t g" style='left:753.60px;top:797.99px;font-size:26px;color:#1f1f1f;letter-spacing:0.343px;'>ProductCategory</span>
<span class="t g" style='left:729.60px;top:924.49px;font-size:26px;color:#4a4a4a;letter-spacing:0.318px;'>Сортировка</span>
<span class="t g" style='left:753.60px;top:1001.99px;font-size:26px;color:#1f1f1f;letter-spacing:-0.282px;'>Price</span>
<span class="t g" style='left:728.60px;top:1128.99px;font-size:26px;color:#4a4a4a;letter-spacing:0.892px;'>Подписи</span>
<span class="t g" style='left:729.60px;top:1317.99px;font-size:26px;color:#4a4a4a;letter-spacing:-0.237px;'>Сплит</span>
<span class="t g" style='left:814.90px;top:1317.99px;font-size:26px;color:#5282ff;font-weight:700;letter-spacing:0.267px;'>beta</span>
<span class="t" style='left:2058.00px;top:238.67px;font-size:26.5px;color:#262626;letter-spacing:0.341px;-webkit-text-stroke:0.65px #262626;'>История изменений</span>
<span class="t g" style='left:2058.75px;top:292.99px;font-size:26px;color:#262626;letter-spacing:0.078px;'>Доступна история за последние</span>
<span class="t g" style='left:2059.60px;top:327.99px;font-size:26px;color:#262626;letter-spacing:-0.225px;'>три месяца</span>
<span class="t g" style='left:2076.60px;top:401.99px;font-size:26px;color:#8c8c8c;letter-spacing:-0.421px;'>10 марта 2025</span>
<span class="t g" style='left:2210.60px;top:483.49px;font-size:26px;color:#1f1f1f;letter-spacing:-0.107px;'>12:20:45</span>
<span class="t g" style='left:2210.60px;top:571.49px;font-size:26px;color:#1f1f1f;letter-spacing:-0.107px;'>12:20:32</span>
<span class="t g" style='left:2210.60px;top:659.49px;font-size:26px;color:#1f1f1f;letter-spacing:-0.107px;'>12:20:14</span>
<span class="t g" style='left:2210.60px;top:747.49px;font-size:26px;color:#1f1f1f;letter-spacing:-0.107px;'>12:19:19</span>
<span class="t" style='left:1222.60px;top:231.38px;font-size:22px;color:#7d7d7d;font-family:"DejaVu Sans", "Liberation Sans", sans-serif;'>15M</span>
<span class="t g" style='left:1202.60px;top:382.13px;font-size:22px;color:#7d7d7d;font-family:"DejaVu Sans", "Liberation Sans", sans-serif;letter-spacing:-0.246px;'>12,5M</span>
<span class="t g" style='left:1221.85px;top:530.13px;font-size:22px;color:#7d7d7d;font-family:"DejaVu Sans", "Liberation Sans", sans-serif;letter-spacing:0.378px;'>10M</span>
<span class="t g" style='left:1217.60px;top:679.63px;font-size:22px;color:#7d7d7d;font-family:"DejaVu Sans", "Liberation Sans", sans-serif;letter-spacing:-0.662px;'>7,5M</span>
<span class="t g" style='left:1237.60px;top:828.13px;font-size:22px;color:#7d7d7d;font-family:"DejaVu Sans", "Liberation Sans", sans-serif;letter-spacing:-0.997px;'>5M</span>
<span class="t g" style='left:1217.60px;top:977.63px;font-size:22px;color:#7d7d7d;font-family:"DejaVu Sans", "Liberation Sans", sans-serif;letter-spacing:-0.662px;'>2,5M</span>
<span class="t g" style='left:1254.85px;top:1126.13px;font-size:22px;color:#7d7d7d;font-family:"DejaVu Sans", "Liberation Sans", sans-serif;'>0</span>
<div class="a" style="left:2526px;top:3px;width:31px;height:1434px;background:#f1f1f1;"></div>
<div class="a" style="left:2529px;top:33px;width:28px;height:1281px;background:#c1c1c1;"></div>
<svg style="left:2536px;top:14px" width="15" height="8" viewBox="0 0 15 8"><path d="M0 8L7.5 0 15 8z" fill="#a3a3a3"/></svg>
<svg style="left:2536px;top:1418px" width="15" height="8" viewBox="0 0 15 8"><path d="M0 0L7.5 8 15 0z" fill="#505050"/></svg>
<div class="a" style="left:0px;top:0px;width:2560px;height:3px;background:#c9c9c9;z-index:50"></div>
<div class="a" style="left:0px;top:1437px;width:2560px;height:3px;background:#c9c9c9;z-index:50"></div>
<div class="a" style="left:0px;top:0px;width:3px;height:1440px;background:#c9c9c9;z-index:50"></div>
<div class="a" style="left:2557px;top:0px;width:3px;height:1440px;background:#c9c9c9;z-index:50"></div>
</body></html>
